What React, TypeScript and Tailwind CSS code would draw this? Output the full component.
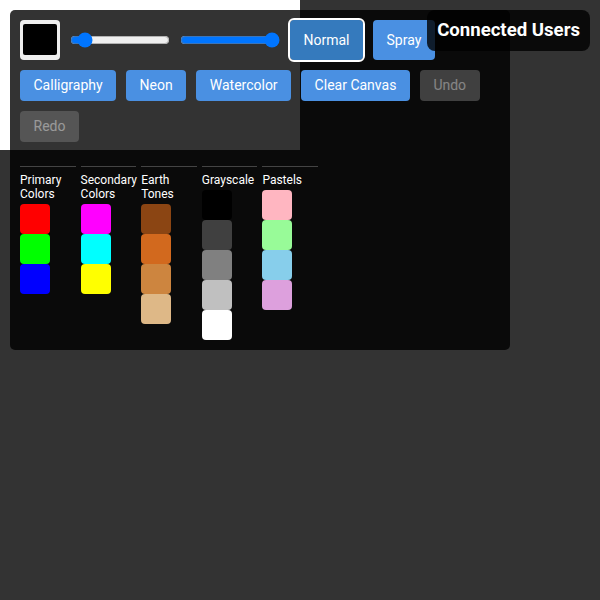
import { useState } from 'react'

const brushes = ['Normal', 'Spray', 'Calligraphy', 'Neon', 'Watercolor']

const palettes = [
  { name: 'Primary Colors', colors: ['#ff0000', '#00ff00', '#0000ff'] },
  { name: 'Secondary Colors', colors: ['#ff00ff', '#00ffff', '#ffff00'] },
  { name: 'Earth Tones', colors: ['#8b4513', '#d2691e', '#cd853f', '#deb887'] },
  { name: 'Grayscale', colors: ['#000000', '#404040', '#808080', '#c0c0c0', '#ffffff'] },
  { name: 'Pastels', colors: ['#ffb6c1', '#98fb98', '#87ceeb', '#dda0dd'] },
]

const btn = 'rounded-[4px] px-[13.5px] py-[7px] text-[14px] leading-[17px] text-white'

export default function App() {
  const [color, setColor] = useState('#000000')
  const [size, setSize] = useState(5)
  const [opacity, setOpacity] = useState(1)
  const [brush, setBrush] = useState('Normal')

  return (
    <div className="relative h-[600px] w-full overflow-hidden bg-[#333333] font-['Roboto',sans-serif]">
      <canvas width={300} height={150} className="block bg-white" />

      {/* Toolbar */}
      <div className="absolute left-[10px] top-[10px] w-[500px] rounded-[5px] bg-black/80 p-[10px]">
        <div className="flex flex-wrap gap-[10px]">
          <div className="h-[40px] w-[40px] rounded-[4px] bg-[#efefef] px-[3px] pb-[5px] pt-[4px]">
            <div className="h-full w-full rounded-[2px]" style={{ backgroundColor: color }} onClick={() => setColor(color)} />
          </div>
          <input
            type="range"
            min={1}
            max={50}
            value={size}
            onChange={e => setSize(Number(e.target.value))}
            className="w-[100px]"
          />
          <input
            type="range"
            min={0}
            max={1}
            step={0.1}
            value={opacity}
            onChange={e => setOpacity(Number(e.target.value))}
            className="w-[100px]"
          />
          {brushes.map(b => (
            <button
              key={b}
              onClick={() => setBrush(b)}
              className={
                brush === b
                  ? `${btn} bg-[#357abd] outline-2 outline-white`
                  : `${btn} bg-[#4a90e2]`
              }
            >
              {b}
            </button>
          ))}
          <button className={`${btn} bg-[#4a90e2]`}>Clear Canvas</button>
          <button disabled className={`${btn} bg-[#777777] text-[#cccccc] opacity-50`}>Undo</button>
          <button disabled className={`${btn} bg-[#777777] text-[#cccccc] opacity-50`}>Redo</button>
        </div>

        {/* Color palettes */}
        <div className="mt-[24px] grid w-[298px] grid-cols-5 gap-x-[5px]">
          {palettes.map(p => (
            <div key={p.name} className="border-t border-[#444444] pt-[6px]">
              <p className="mb-[3px] text-[12px] leading-[14px] text-white">{p.name}</p>
              <div className="flex flex-col">
                {p.colors.map(c => (
                  <button
                    key={c}
                    onClick={() => setColor(c)}
                    className="h-[30px] w-[30px] rounded-[4px]"
                    style={{ backgroundColor: c }}
                  />
                ))}
              </div>
            </div>
          ))}
        </div>
      </div>

      <div className="absolute right-[10px] top-[10px] rounded-[8px] bg-black/80 px-[10px] py-[10px]">
        <h3 className="text-[18.6px] font-bold leading-[21px] text-white">Connected Users</h3>
      </div>
    </div>
  )
}
